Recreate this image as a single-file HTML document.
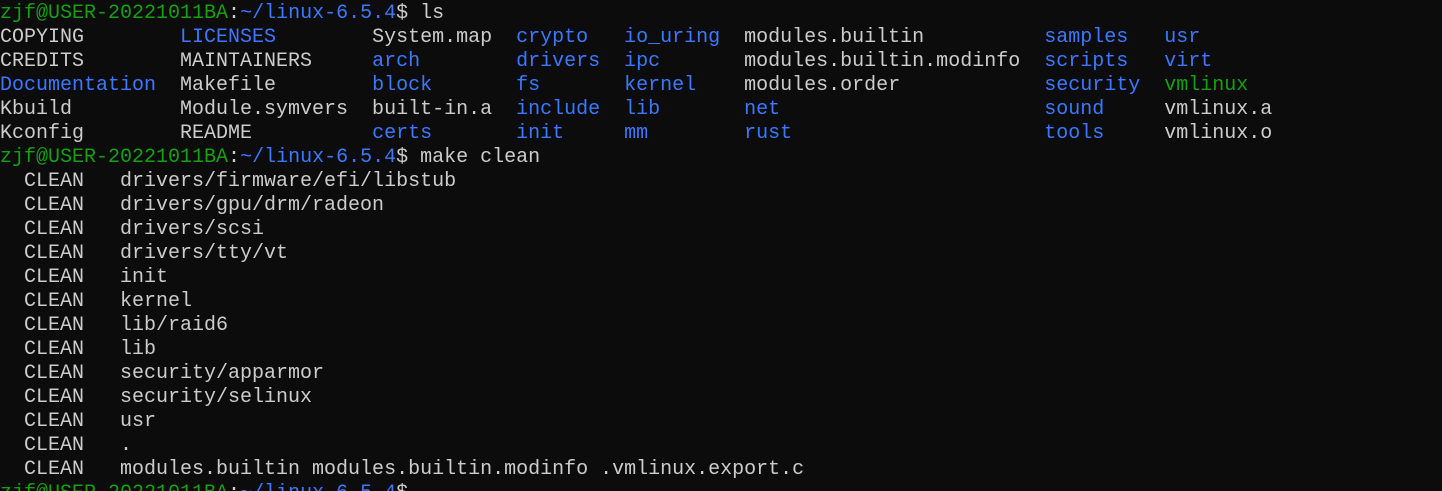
<!DOCTYPE html>
<html><head><meta charset="utf-8"><style>
html,body{margin:0;padding:0;background:#0c0c0c;width:1442px;height:491px;overflow:hidden}
pre{margin:0;padding-top:2px;font-family:"Liberation Mono","Noto Sans CJK SC",monospace;font-size:20px;line-height:24px;color:#cccccc;white-space:pre}
.g{color:#13a10e}.b{color:#3b78ff}
</style></head><body><pre><span class="g">zjf@USER-20221011BA</span>:<span class="b">~/linux-6.5.4</span>$ ls
COPYING        <span class="b">LICENSES</span>        System.map  <span class="b">crypto</span>   <span class="b">io_uring</span>  modules.builtin          <span class="b">samples</span>   <span class="b">usr</span>
CREDITS        MAINTAINERS     <span class="b">arch</span>        <span class="b">drivers</span>  <span class="b">ipc</span>       modules.builtin.modinfo  <span class="b">scripts</span>   <span class="b">virt</span>
<span class="b">Documentation</span>  Makefile        <span class="b">block</span>       <span class="b">fs</span>       <span class="b">kernel</span>    modules.order            <span class="b">security</span>  <span class="g">vmlinux</span>
Kbuild         Module.symvers  built-in.a  <span class="b">include</span>  <span class="b">lib</span>       <span class="b">net</span>                      <span class="b">sound</span>     vmlinux.a
Kconfig        README          <span class="b">certs</span>       <span class="b">init</span>     <span class="b">mm</span>        <span class="b">rust</span>                     <span class="b">tools</span>     vmlinux.o
<span class="g">zjf@USER-20221011BA</span>:<span class="b">~/linux-6.5.4</span>$ make clean
  CLEAN   drivers/firmware/efi/libstub
  CLEAN   drivers/gpu/drm/radeon
  CLEAN   drivers/scsi
  CLEAN   drivers/tty/vt
  CLEAN   init
  CLEAN   kernel
  CLEAN   lib/raid6
  CLEAN   lib
  CLEAN   security/apparmor
  CLEAN   security/selinux
  CLEAN   usr
  CLEAN   .
  CLEAN   modules.builtin modules.builtin.modinfo .vmlinux.export.c
<span class="g">zjf@USER-20221011BA</span>:<span class="b">~/linux-6.5.4</span>$
</pre></body></html>
